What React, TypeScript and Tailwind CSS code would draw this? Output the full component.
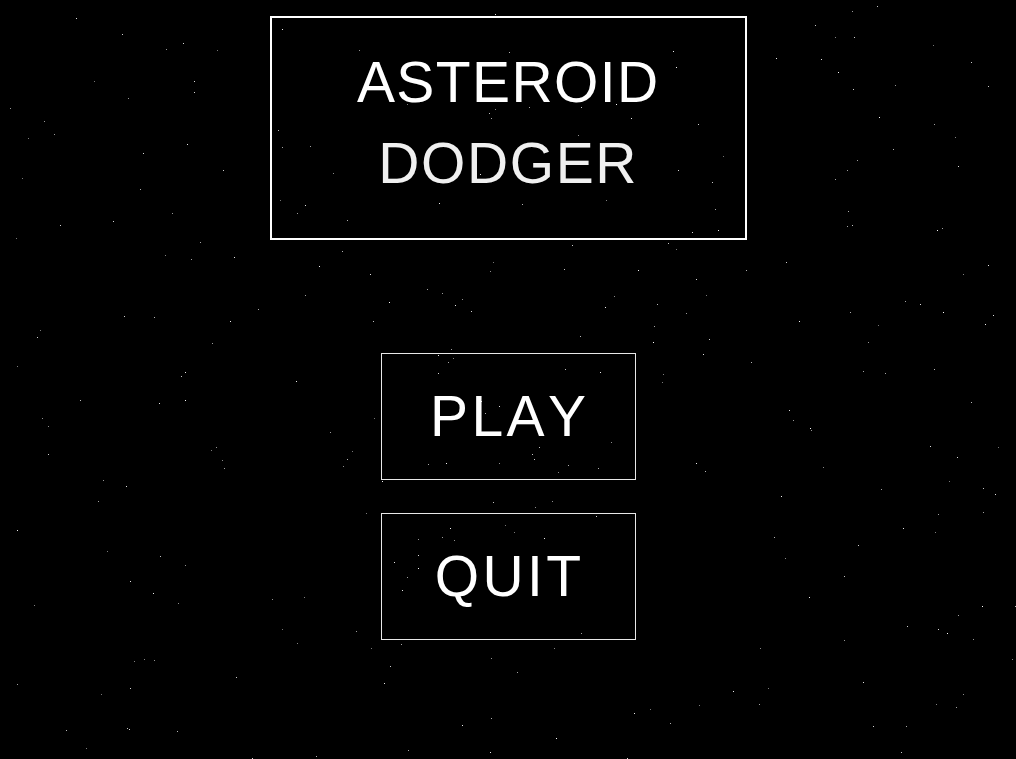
import { useMemo } from "react";

function rng(seed: number) {
  let a = seed;
  return () => {
    a |= 0;
    a = (a + 0x6d2b79f5) | 0;
    let t = Math.imul(a ^ (a >>> 15), 1 | a);
    t = (t + Math.imul(t ^ (t >>> 7), 61 | t)) ^ t;
    return ((t ^ (t >>> 14)) >>> 0) / 4294967296;
  };
}

function Starfield() {
  const stars = useMemo(() => {
    const r = rng(1337);
    return Array.from({ length: 300 }, () => ({
      x: Math.floor(r() * 1016),
      y: Math.floor(r() * 759),
      o: 0.45 + r() * 0.55,
    }));
  }, []);

  return (
    <svg
      className="absolute inset-0 h-full w-full"
      viewBox="0 0 1016 759"
      shapeRendering="crispEdges"
    >
      {stars.map((s, i) => (
        <rect key={i} x={s.x} y={s.y} width={1} height={1} fill="#fff" opacity={s.o} />
      ))}
    </svg>
  );
}

function MenuButton({ label }: { label: string }) {
  return (
    <div className="flex h-[127px] w-[255px] items-center justify-center border border-[#e8e8e8] pb-[1px]">
      <span className="pl-[3.4px] text-[57px] leading-none tracking-[3.4px] text-white">{label}</span>
    </div>
  );
}

export default function App() {
  return (
    <div className="relative h-[759px] w-full overflow-hidden bg-black font-['Liberation_Sans',Arial,sans-serif] [font-kerning:none]">
      <Starfield />
      <div className="relative flex flex-col items-center pt-[16px]">
        <div className="flex h-[224px] w-[477px] flex-col items-center border-2 border-white pt-[24px]">
          <span className="pl-[0.5px] text-[57px] leading-[81px] tracking-[1.4px] text-white">ASTEROID</span>
          <span className="pl-[0.5px] text-[57px] leading-[81px] tracking-[1.6px] text-[#f0f0f0]">DODGER</span>
        </div>
        <div className="mt-[113px] flex flex-col gap-[33px]">
          <MenuButton label="PLAY" />
          <MenuButton label="QUIT" />
        </div>
      </div>
    </div>
  );
}
